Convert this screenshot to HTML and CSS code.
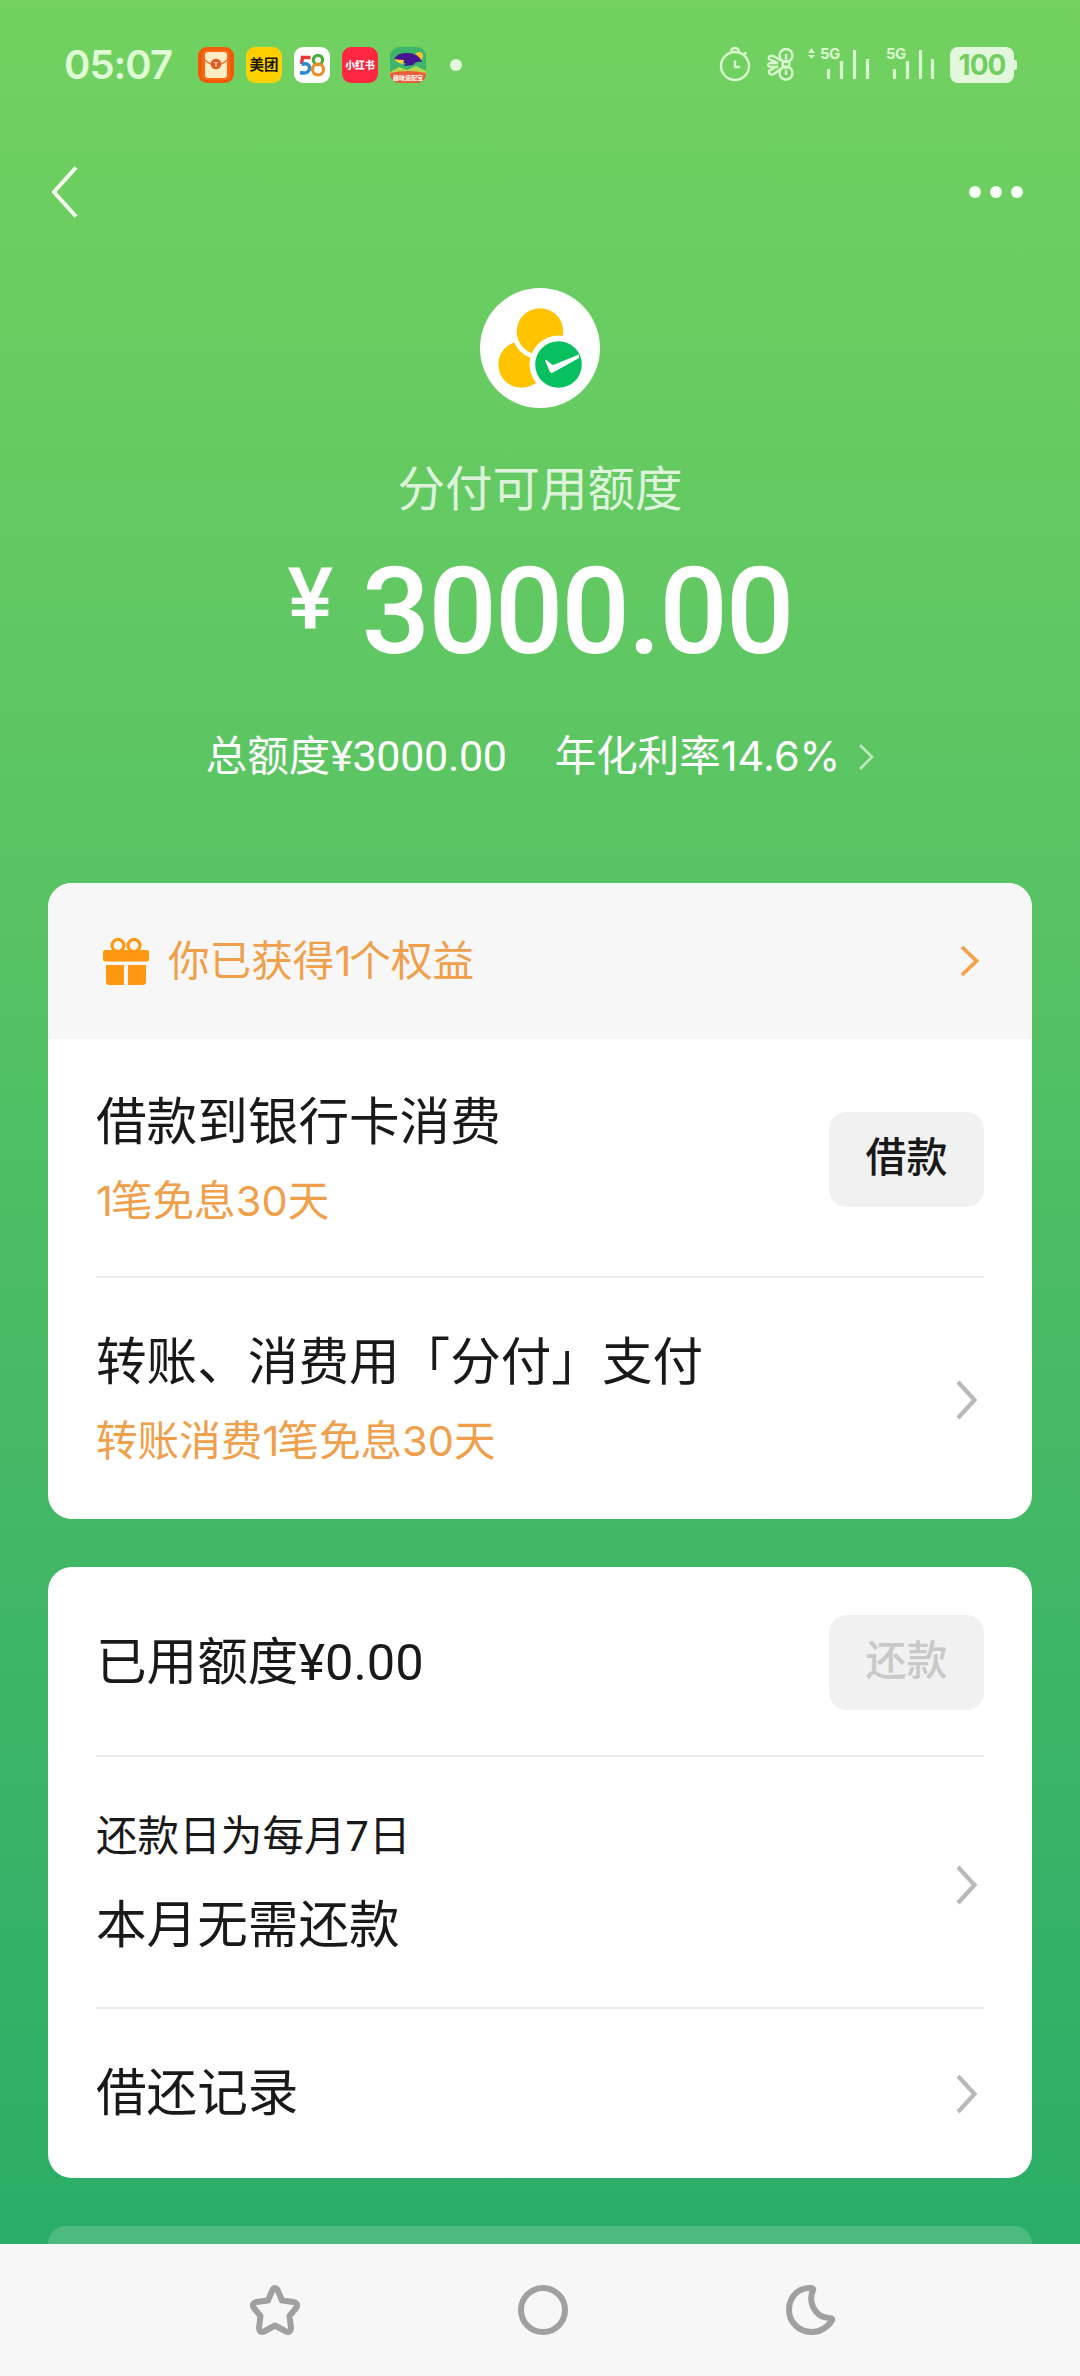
FILE: index.html
```html
<!DOCTYPE html>
<html lang="zh-CN">
<head>
<meta charset="utf-8">
<title>分付</title>
<link rel="stylesheet" href="styles.css">
</head>
<body>
<div class="screen">
  <header class="status">
    <div class="time">05:07</div>
    <div class="apps">
      <svg width="36" height="36" viewBox="0 0 36 36"><rect width="36" height="36" rx="9" fill="#f2590a"/><rect x="4" y="3" width="28" height="30" rx="5" fill="#ff7a1c" opacity=".5"/><rect x="7" y="5" width="22" height="26" rx="3" fill="#ffecc4"/><path d="M7 13Q12 18 18 18T29 13" fill="none" stroke="#e8742c" stroke-width="1.3"/><circle cx="18" cy="17" r="5.3" fill="#dd5a22"/><text x="18" y="20.3" class="glyph-t">T</text></svg>
      <svg width="36" height="36" viewBox="0 0 36 36"><rect width="36" height="36" rx="9" fill="#ffd000"/><text x="18" y="23.4" class="glyph-mt">美团</text></svg>
      <svg width="36" height="36" viewBox="0 0 36 36"><rect width="36" height="36" rx="9" fill="#fff"/><path d="M16.500 10.500H8.500L7.500 17" fill="none" stroke="#e5383b" stroke-width="3.400"/><path d="M7.500 17.500Q15.500 15 15.500 21.500Q14.500 27.500 6 25.500" fill="none" stroke="#2a8bd0" stroke-width="3.400"/><circle cx="24" cy="13" r="4.600" fill="none" stroke="#4caf3a" stroke-width="3.200"/><circle cx="24" cy="22.500" r="5.500" fill="none" stroke="#f08c22" stroke-width="3.200"/></svg>
      <svg width="36" height="36" viewBox="0 0 36 36"><rect width="36" height="36" rx="9" fill="#ff2741"/><text x="18" y="22.300" class="glyph-xhs">小红书</text></svg>
      <svg width="36" height="36" viewBox="0 0 36 36"><defs><clipPath id="r"><rect width="36" height="36" rx="9"/></clipPath></defs><g clip-path="url(#r)"><rect width="36" height="36" fill="#3fb56c"/><circle cx="29" cy="9" r="4" fill="#f2c52c"/><path d="M0 25L9 20L17 23L26 19L36 24V30H0Z" fill="#b9d64a"/><path d="M4 12Q8 5 17 6Q29 6 32 15Q26 14 23 18L14 19L16 16Q8 16 4 12Z" fill="#45168f"/><path d="M4 12Q9 13 14 13L13 17Q7 16 4 12Z" fill="#ffd23c"/><path d="M0 26Q18 22 36 26V36H0Z" fill="#ee5b38"/><text x="18" y="33" class="glyph-game">趣味速配宝</text></g></svg>
    </div>
    <i class="notice"></i>
    <svg class="indicators" width="220" height="60" viewBox="716 35 220 60" fill="none" stroke="#d9f8cf" stroke-width="2.400">
      <circle cx="735" cy="66" r="14"/><path d="M731 51Q732 48 735 48T739 51M743.500 54.500L746.500 52.500M735 60.500V67H740"/>
      <circle cx="786" cy="55.500" r="6.500"/><circle cx="786" cy="73" r="6.500"/><circle cx="786" cy="64.300" r="3.500"/><path d="M786 54V59M786 70V75M782 61L773 56Q768 55 769 59L778 63M778 63H770Q766 65 770 67H778M778 66L769 71Q769 76 774 74L782 68"/>
      <path d="M811.500 48L815 53H808ZM811.500 59L808 55H815Z" fill="#d9f8cf" stroke="none"/>
      <path d="M828.500 69V79M841.500 61V79M854.500 50V79M867.500 59V79M894.500 69V79M907.500 61V79M920.500 50V79M932.500 59V79" stroke-width="3.200"/>
      <text x="820" y="59" class="net">5G</text><text x="886" y="59" class="net">5G</text>
    </svg>
    <div class="battery">100</div>
  </header>

  <nav class="nav">
    <svg width="30" height="56" viewBox="0 0 30 56"><path d="M26 3.500L4 28L26 52.500" fill="none" stroke="#f4fff0" stroke-width="4"/></svg>
    <div class="more"><i></i><i></i><i></i></div>
  </nav>

  <section class="hero">
    <svg class="logo" width="120" height="120" viewBox="0 0 120 120">
      <circle cx="60" cy="60" r="60" fill="#fff"/>
      <circle cx="41.500" cy="76.500" r="23.200" fill="#ffc300"/>
      <circle cx="60" cy="43.500" r="28" fill="#fff"/><circle cx="60" cy="43.500" r="23.200" fill="#ffc300"/>
      <circle cx="78.500" cy="76.500" r="29" fill="#fff"/><circle cx="78.500" cy="76.500" r="23.300" fill="#07c160"/>
      <path d="M65 72.500Q65.500 71 67 72.500L72 76.500Q73 77.200 74.500 76.500L99 66.500V70L73 84.500Q71.200 86 70 84Z" fill="#fff"/>
    </svg>
    <div class="hero-label">分付可用额度</div>
    <div class="amount"><span class="yen">¥</span><span class="value">3000.00</span></div>
    <div class="terms"><span>总额度<b>¥3000.00</b></span><span class="rate">年化利率<span class="num">14.6%</span></span>
      <svg width="16" height="30" viewBox="0 0 16 30"><path d="M2 3L14 15L2 27" fill="none" stroke="#fff" stroke-width="2.600" opacity=".6"/></svg></div>
  </section>

  <section class="card">
    <div class="benefit">
      <svg width="46" height="47" viewBox="0 0 46 47" fill="#ff9810"><rect x="0" y="12" width="46" height="11.500" rx="2"/><path d="M3 27H21V47H6Q3 47 3 44ZM25 27H43V44Q43 47 40 47H25Z"/><g fill="none" stroke="#ff9810" stroke-width="3.200"><circle cx="15" cy="7.500" r="6"/><circle cx="31" cy="7.500" r="6"/></g></svg>
      <span class="benefit-text">你已获得<span class="one">1</span>个权益</span>
      <svg width="20" height="32" viewBox="0 0 20 32"><path d="M2 2L16.500 16L2 30" fill="none" stroke="#f5a14b" stroke-width="3.800"/></svg>
    </div>
    <div class="row row-borrow">
      <div><div class="title">借款到银行卡消费</div><div class="sub"><span class="one">1</span>笔免息<span class="num">30</span>天</div></div>
      <button class="btn">借款</button>
    </div>
    <div class="row row-pay">
      <div><div class="title">转账、消费用「分付」支付</div><div class="sub">转账消费<span class="one">1</span>笔免息<span class="num">30</span>天</div></div>
      <svg class="arrow" viewBox="0 0 22 40"><path d="M2 2L18.500 20L2 38"/></svg>
    </div>
  </section>

  <section class="card">
    <div class="row row-used">
      <div class="title">已用额度<b>¥0.00</b></div>
      <button class="btn" disabled>还款</button>
    </div>
    <div class="row row-due">
      <div><div class="day">还款日为每月7日</div><div class="title">本月无需还款</div></div>
      <svg class="arrow" viewBox="0 0 22 40"><path d="M2 2L18.500 20L2 38"/></svg>
    </div>
    <div class="row row-log">
      <div class="title">借还记录</div>
      <svg class="arrow" viewBox="0 0 22 40"><path d="M2 2L18.500 20L2 38"/></svg>
    </div>
  </section>

  <section class="card card-next"></section>

  <footer class="keys">
    <svg width="56" height="56" viewBox="0 0 56 56"><path d="M28 6Q30 6 31 9L35 18.500L46.500 20Q51.500 21 49.500 25.500L42.500 34L44 46Q43.500 51.500 39 49.500L28 43.500L17 49.500Q12.500 51.500 12 46L13.500 34L6.500 25.500Q4.500 21 9.500 20L21 18.500L25 9Q26 6 28 6Z"/></svg>
    <svg width="56" height="56" viewBox="0 0 56 56"><circle cx="28" cy="28" r="22"/></svg>
    <svg width="56" height="56" viewBox="0 0 56 56"><path d="M27 6C14 6 6 16 6 28S16 50 29 50C39 50 46 43 49 38.500Q50 36 46 36C31 35 25 19 30 8.500Q31 6 27 6Z"/></svg>
  </footer>
</div>
</body>
</html>
```
FILE: styles.css
```css
* { box-sizing: border-box; }
body { margin: 0; font-family: Roboto, "Noto Sans CJK SC", sans-serif; color: #191919; }
svg { display: block; flex: none; }
b { font-weight: 450; }

.screen {
  width: 1080px; height: 2376px; overflow: hidden;
  display: flex; flex-direction: column;
  background: linear-gradient(#72d160 0, #5dc663 740px, #42b766 1540px, #2bae67 2210px);
}

/* status bar */
.status { height: 130px; display: flex; align-items: center; padding-left: 64px; flex: none; }
.time { width: 134px; font: 600 40px/40px Inter, sans-serif; letter-spacing: -1px; color: #dffbd6; }
.apps { display: flex; gap: 12px; }
.notice { width: 12px; height: 12px; margin-left: 24px; border-radius: 50%; background: #e3fbdc; }
.indicators { margin-left: 254px; }
.battery {
  position: relative; width: 64px; height: 36px; margin-left: 14px; border-radius: 8px;
  background: #e2f7dc; color: #70cf60; text-align: center;
  font: 650 28px/37px Inter, sans-serif; letter-spacing: -1px;
}
.battery::after { content: ""; position: absolute; right: -3px; top: 13px; width: 3px; height: 10px; border-radius: 0 2px 2px 0; background: #e2f7dc; }
.net { font: 700 15px Inter, sans-serif; letter-spacing: -0.7px; fill: #d9f8cf; stroke: none; }
.glyph-t { font: 700 8px Roboto, sans-serif; fill: #ffd9a8; text-anchor: middle; }
.glyph-mt { font: 700 14.500px "Noto Sans CJK SC", sans-serif; fill: #1a1500; text-anchor: middle; }
.glyph-xhs { font: 900 9.800px "Noto Sans CJK SC", sans-serif; fill: #fff; text-anchor: middle; }
.glyph-game { font: 700 6px "Noto Sans CJK SC", sans-serif; fill: #fff; text-anchor: middle; }

/* navigation */
.nav { height: 124px; padding: 0 57px 0 50px; display: flex; align-items: center; justify-content: space-between; flex: none; }
.more { display: flex; gap: 9px; }
.more i { width: 12px; height: 12px; border-radius: 50%; background: #f6fff3; }

/* available credit */
.hero { height: 629px; padding-top: 34px; display: flex; flex-direction: column; align-items: center; color: #fff; flex: none; }
.hero-label { margin-top: 50px; font-size: 47.500px; line-height: 64px; color: rgba(255, 255, 255, .8); }
.amount { margin-top: 29px; height: 122px; display: flex; font-weight: 500; }
.yen { width: 74px; padding-top: 4px; font-size: 86px; line-height: 90px; }
.value { font-size: 121px; line-height: 123px; letter-spacing: -2.200px; }
.terms { margin-top: 53px; display: flex; align-items: center; font-size: 41.500px; line-height: 60px; }
.terms b { font-size: 43px; letter-spacing: -0.3px; }
.rate { margin: 0 18px 0 48px; }

/* cards */
.card { margin: 0 48px 48px; border-radius: 24px; background: #fff; overflow: hidden; flex: none; }
.benefit { height: 156px; padding: 0 52px 0 55px; display: flex; align-items: center; background: #f7f7f7; color: #f0a04b; }
.benefit-text { flex: 1; margin-left: 19px; font-size: 41.600px; line-height: 60px; }
.one { font-family: Inter, sans-serif; letter-spacing: -2px; }
.num { font-family: Inter, sans-serif; }
.row { margin: 0 48px; display: flex; align-items: center; justify-content: space-between; }
.row + .row { border-top: 2px solid #ebebeb; }
.title { font-size: 50.600px; line-height: 70px; }
.sub { margin-top: 13px; font-size: 41.600px; line-height: 60px; color: #f0a04b; }
.day { margin-bottom: 24px; font-size: 41.600px; line-height: 60px; }
.row-borrow { height: 237px; padding-top: 4px; }
.benefit + .row-borrow { border-top: 0; }
.row-pay { height: 243px; padding-top: 3px; }
.row-used { height: 188px; padding-top: 3px; }
.row-due { height: 252px; padding-top: 3px; }
.row-due .arrow { margin-top: 2px; }
.row-log { height: 171px; }
.btn {
  width: 155px; height: 95px; padding: 0 0 4px; border: 0; border-radius: 18px;
  background: #f1f1f1; color: #191919; font: 500 41px/60px Roboto, "Noto Sans CJK SC", sans-serif;
}
.btn:disabled { color: #c9c9c9; }
.arrow { width: 22px; height: 40px; margin-right: 6px; fill: none; stroke: #b9b9b9; stroke-width: 4.200; }
.card-next { height: 18px; margin-bottom: 0; border-radius: 24px 24px 0 0; background: rgba(255, 255, 255, .16); }

/* system keys */
.keys {
  height: 132px; padding-left: 247px; display: flex; align-items: center; gap: 212px;
  background: #f7f7f7; flex: none;
}
.keys svg { fill: none; stroke: #a0a0a0; stroke-width: 6; stroke-linejoin: round; }
```
